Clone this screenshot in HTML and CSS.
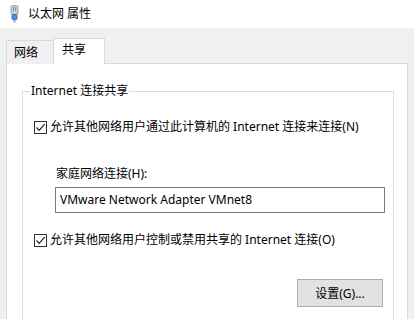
FILE: index.html
```html
<!DOCTYPE html>
<html lang="zh-CN">
<head>
    <meta charset="UTF-8">
    <meta name="viewport" content="width=device-width, initial-scale=1.0">
    <title>以太网 属性</title>
    <link rel="stylesheet" href="styles.css">
</head>
<body>
    <!-- Заголовок окна -->
    <div class="titlebar">
        <svg class="title-icon" width="9" height="18" viewBox="0 0 9 18">
            <rect x="1" y="0.5" width="7" height="9" rx="1.5" fill="#c9ccd1" stroke="#9da3ab"/>
            <rect x="3" y="2" width="1" height="4" fill="#8f959d"/>
            <rect x="5" y="2" width="1" height="4" fill="#8f959d"/>
            <rect x="2" y="9.5" width="5" height="5" rx="1" fill="#4f8fd6" stroke="#2f6fb8"/>
            <rect x="3.5" y="14.5" width="2" height="3" fill="#7da9dc"/>
        </svg>
        <span>以太网 属性</span>
    </div>

    <!-- Вкладки -->
    <div class="tabs">
        <div class="tab">网络</div>
        <div class="tab active">共享</div>
    </div>

    <div class="panel">
        <fieldset class="group">
            <legend>Internet 连接共享</legend>

            <div class="check-row first">
                <span class="checkbox">
                    <svg width="11" height="11" viewBox="0 0 11 11"><path d="M1.5 5.5 L4.2 8.3 L9.6 2.2" fill="none" stroke="#222" stroke-width="1.2"/></svg>
                </span>
                <span>允许其他网络用户通过此计算机的 Internet 连接来连接(N)</span>
            </div>

            <div class="home-net">
                <div class="home-label">家庭网络连接(H):</div>
                <div class="textbox">VMware Network Adapter VMnet8</div>
            </div>

            <div class="check-row">
                <span class="checkbox">
                    <svg width="11" height="11" viewBox="0 0 11 11"><path d="M1.5 5.5 L4.2 8.3 L9.6 2.2" fill="none" stroke="#222" stroke-width="1.2"/></svg>
                </span>
                <span>允许其他网络用户控制或禁用共享的 Internet 连接(O)</span>
            </div>

            <div class="buttons">
                <button type="button" class="btn">设置(G)...</button>
            </div>
        </fieldset>
    </div>
</body>
</html>
```

FILE: styles.css
```css
/* Основные стили */
body {
    margin: 0;
    background: #f0f0f0;
    font-family: "Noto Sans", "Noto Sans CJK SC", sans-serif;
    font-size: 12px;
    line-height: 16px;
    color: #000;
    height: 319px;
    overflow: hidden;
}

.titlebar {
    height: 28px;
    background: #fff;
    display: flex;
    align-items: center;
    padding-left: 10px;
    gap: 9px;
}

.title-icon {
    display: block;
    margin-top: -1px;
}

/* Вкладки */
.tabs {
    display: flex;
    align-items: flex-end;
    padding: 10px 0 0 6px;
    height: 26px;
    position: relative;
    z-index: 1;
}

.tab {
    box-sizing: border-box;
    height: 24px;
    width: 48px;
    border: 1px solid #d9d9d9;
    border-bottom: none;
    background: #f0f0f0;
    display: flex;
    align-items: center;
    padding-left: 7px;
}

.tab.active {
    height: 26px;
    width: 52px;
    margin-left: -1px;
    background: #fff;
    padding-left: 8px;
    padding-bottom: 3px;
}

.panel {
    box-sizing: border-box;
    margin-left: 6px;
    margin-top: -1px;
    width: 402px;
    height: 258px;
    overflow: hidden;
    background: #fff;
    border: 1px solid #d9d9d9;
    border-bottom: none;
    padding: 19px 13px 0 15px;
}

/* Групповое поле */
.group {
    margin: 0;
    height: 260px;
    border: 1px solid #dcdcdc;
    padding: 0 8px 0 11px;
}

.group legend {
    margin-left: -4px;
    padding: 0 1px;
    line-height: 16px;
}

.check-row {
    display: flex;
    align-items: center;
    gap: 3px;
    height: 16px;
}

.check-row.first {
    margin-top: 20px;
}

.checkbox {
    box-sizing: border-box;
    width: 13px;
    height: 13px;
    border: 1px solid #333;
    display: flex;
    align-items: center;
    justify-content: center;
    flex-shrink: 0;
}

.checkbox svg {
    display: block;
}

.home-net {
    margin: 31px 0 19px 21px;
}

.home-label {
    padding-left: 1px;
}

.textbox {
    box-sizing: border-box;
    margin-top: 5px;
    height: 26px;
    border: 1px solid #7a7a7a;
    padding-left: 4px;
    display: flex;
    align-items: center;
}

.buttons {
    display: flex;
    justify-content: flex-end;
    margin-top: 31px;
    padding-right: 2px;
}

.btn {
    box-sizing: border-box;
    width: 86px;
    height: 28px;
    background: #e1e1e1;
    border: 1px solid #adadad;
    font-family: inherit;
    font-size: 12px;
    color: #000;
    padding: 0;
}
```
